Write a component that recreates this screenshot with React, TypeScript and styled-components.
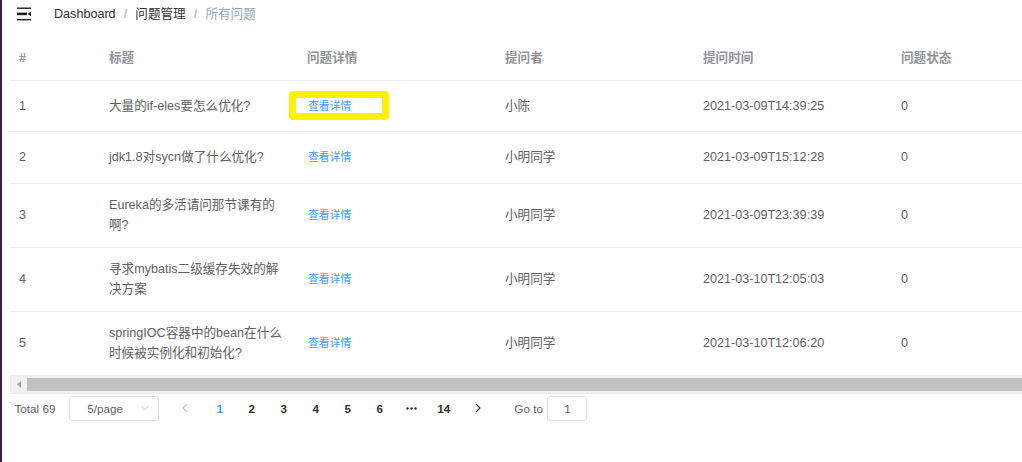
import React from 'react';
import styled, { createGlobalStyle } from 'styled-components';

const GlobalStyle = createGlobalStyle`
  html, body { margin: 0; padding: 0; background: #fff; overflow: hidden; }
  body {
    font-family: "Liberation Sans", "Noto Sans CJK SC", sans-serif;
    -webkit-font-smoothing: antialiased;
  }
  *, *::before, *::after { box-sizing: border-box; }
`;

const Shell = styled.div`
  display: flex;
  width: 1022px;
  height: 462px;
  overflow: hidden;
`;

const SideStrip = styled.div`
  flex: 0 0 2px;
  background: #431848;
`;

const Main = styled.div`
  flex: 0 0 auto;
  width: 1200px;
  padding-left: 8px;
  display: flex;
  flex-direction: column;
`;

const Navbar = styled.div`
  height: 28px;
  display: flex;
  align-items: center;
  padding-left: 7px;
`;

const Hamburger = styled.svg`
  width: 14px;
  height: 14px;
  margin-right: 23px;
  flex: 0 0 auto;
`;

const Breadcrumb = styled.nav`
  display: flex;
  align-items: center;
  font-size: 12.6px;
  line-height: 20px;
`;

const Crumb = styled.span<{ $current?: boolean }>`
  color: ${(p) => (p.$current ? '#97a8be' : '#303133')};
`;

const Sep = styled.span`
  margin: 0 8.1px;
  color: #c0c4cc;
  font-weight: bold;
`;

const Table = styled.table`
  border-collapse: collapse;
  table-layout: fixed;
  width: 1080px;
  margin-top: 9.7px;
  font-size: 12.6px;
  color: #606266;
`;

const Col = styled.col<{ $w: number }>`
  width: ${(p) => p.$w}px;
`;

const Th = styled.th`
  padding: 10.8px 0;
  border-bottom: 1px solid #ebeef5;
  text-align: left;
  font-weight: bold;
  color: #909399;
  vertical-align: middle;
`;

const Td = styled.td<{ $tall?: boolean }>`
  padding: ${(p) => (p.$tall ? '11.3px 0' : '10.8px 0')};
  border-bottom: 1px solid #ebeef5;
  vertical-align: middle;
`;

const Cell = styled.div`
  padding: 0 9px;
  line-height: 20.7px;
  word-break: break-all;
`;

const DetailButton = styled.button<{ $highlight?: boolean }>`
  position: relative;
  display: block;
  height: 28.8px;
  padding: 0;
  border: 1px solid transparent;
  background: transparent;
  color: #409eff;
  font-family: inherit;
  font-size: 10.8px;
  line-height: 26.8px;
  cursor: pointer;
  &::after {
    content: '';
    display: ${(p) => (p.$highlight ? 'block' : 'none')};
    position: absolute;
    left: -19.5px;
    top: -1.6px;
    width: 100px;
    height: 29px;
    border: 7px solid #fff200;
    border-radius: 4px;
  }
`;

const HScroll = styled.div`
  display: flex;
  align-items: center;
  width: 1080px;
  height: 18px;
  background: #f1f1f1;
  border-bottom: 1px solid #ebeef5;
`;

const ScrollArrow = styled.div`
  flex: 0 0 17px;
  height: 17px;
  display: flex;
  align-items: center;
  justify-content: center;
`;

const ScrollThumb = styled.div`
  flex: 1;
  height: 13px;
  background: #c1c1c1;
`;

const Pagination = styled.div`
  display: flex;
  align-items: center;
  padding: 2px 4.5px;
  font-size: 11.7px;
  color: #303133;
  font-weight: bold;
`;

const Total = styled.span`
  height: 25.2px;
  line-height: 25.2px;
  margin-right: 13.3px;
  font-weight: normal;
  color: #606266;
`;

const SizeSelect = styled.div`
  position: relative;
  display: flex;
  align-items: center;
  width: 90px;
  height: 25.2px;
  margin-right: 13px;
  padding-left: 17.5px;
  border: 1px solid #dcdfe6;
  border-radius: 3px;
  font-weight: normal;
  color: #606266;
`;

const SelectArrow = styled.svg`
  position: absolute;
  right: 9px;
  top: 50%;
  margin-top: -3px;
  width: 8px;
  height: 6px;
`;

const NavBtn = styled.div<{ $side: 'prev' | 'next' }>`
  display: flex;
  align-items: center;
  justify-content: center;
  width: 32px;
  height: 25.2px;
  padding: ${(p) => (p.$side === 'prev' ? '0 10.8px 0 5.4px' : '0 5.4px 0 10.8px')};
`;

const Pager = styled.ul`
  display: flex;
  margin: 0;
  padding: 0;
  list-style: none;
`;

const PageItem = styled.li<{ $active?: boolean }>`
  width: 32px;
  height: 25.2px;
  line-height: 25.2px;
  text-align: center;
  color: ${(p) => (p.$active ? '#409eff' : '#303133')};
  display: flex;
  align-items: center;
  justify-content: center;
`;

const Jump = styled.span`
  display: flex;
  align-items: center;
  margin-left: 22.6px;
  font-weight: normal;
  color: #606266;
`;

const JumpInput = styled.div`
  width: 40px;
  height: 25.2px;
  line-height: 23.2px;
  margin-left: 4.5px;
  border: 1px solid #dcdfe6;
  border-radius: 3px;
  text-align: center;
  color: #606266;
`;

type Issue = { title: string; asker: string; time: string; status: number };

const issues: Issue[] = [
  { title: '大量的if-eles要怎么优化?', asker: '小陈', time: '2021-03-09T14:39:25', status: 0 },
  { title: 'jdk1.8对sycn做了什么优化?', asker: '小明同学', time: '2021-03-09T15:12:28', status: 0 },
  { title: 'Eureka的多活请问那节课有的啊?', asker: '小明同学', time: '2021-03-09T23:39:39', status: 0 },
  { title: '寻求mybatis二级缓存失效的解决方案', asker: '小明同学', time: '2021-03-10T12:05:03', status: 0 },
  { title: 'springIOC容器中的bean在什么时候被实例化和初始化?', asker: '小明同学', time: '2021-03-10T12:06:20', status: 0 },
];

const columns = ['#', '标题', '问题详情', '提问者', '提问时间', '问题状态'];
const widths = [90, 198, 198, 198, 198, 198];

const Chevron = ({ dir, color }: { dir: 'left' | 'right'; color: string }) => (
  <svg width="6" height="10" viewBox="0 0 6 10">
    <polyline
      points={dir === 'left' ? '5,1 1,5 5,9' : '1,1 5,5 1,9'}
      fill="none"
      stroke={color}
      strokeWidth="1.2"
    />
  </svg>
);

export default function App() {
  return (
    <>
      <GlobalStyle />
      <Shell>
        <SideStrip />
        <Main>
          <Navbar>
            <Hamburger viewBox="0 0 14 14">
              <rect x="0" y="0.5" width="14" height="1.4" fill="#1f1f1f" />
              <rect x="0" y="5.6" width="10" height="2.6" fill="#1f1f1f" />
              <polygon points="10.6,6.9 14,4.6 14,9.2" fill="#1f1f1f" />
              <rect x="0" y="12" width="14" height="1.4" fill="#1f1f1f" />
            </Hamburger>
            <Breadcrumb>
              <Crumb>Dashboard</Crumb>
              <Sep>/</Sep>
              <Crumb>问题管理</Crumb>
              <Sep>/</Sep>
              <Crumb $current>所有问题</Crumb>
            </Breadcrumb>
          </Navbar>

          <Table>
            <colgroup>
              {widths.map((w, i) => (
                <Col key={i} $w={w} />
              ))}
            </colgroup>
            <thead>
              <tr>
                {columns.map((c) => (
                  <Th key={c}>
                    <Cell>{c}</Cell>
                  </Th>
                ))}
              </tr>
            </thead>
            <tbody>
              {issues.map((it, i) => (
                <tr key={i}>
                  <Td $tall={i === 0}>
                    <Cell>{i + 1}</Cell>
                  </Td>
                  <Td>
                    <Cell>{it.title}</Cell>
                  </Td>
                  <Td>
                    <Cell>
                      <DetailButton $highlight={i === 0}>查看详情</DetailButton>
                    </Cell>
                  </Td>
                  <Td>
                    <Cell>{it.asker}</Cell>
                  </Td>
                  <Td>
                    <Cell>{it.time}</Cell>
                  </Td>
                  <Td>
                    <Cell>{it.status}</Cell>
                  </Td>
                </tr>
              ))}
            </tbody>
          </Table>

          <HScroll>
            <ScrollArrow>
              <svg width="4" height="7" viewBox="0 0 4 7">
                <polygon points="0,3.5 4,0 4,7" fill="#a3a3a3" />
              </svg>
            </ScrollArrow>
            <ScrollThumb />
          </HScroll>

          <Pagination>
            <Total>Total 69</Total>
            <SizeSelect>
              5/page
              <SelectArrow viewBox="0 0 8 6">
                <polyline points="0.5,1 4,4.5 7.5,1" fill="none" stroke="#c0c4cc" strokeWidth="1" />
              </SelectArrow>
            </SizeSelect>
            <NavBtn $side="prev">
              <Chevron dir="left" color="#c0c4cc" />
            </NavBtn>
            <Pager>
              <PageItem $active>1</PageItem>
              <PageItem>2</PageItem>
              <PageItem>3</PageItem>
              <PageItem>4</PageItem>
              <PageItem>5</PageItem>
              <PageItem>6</PageItem>
              <PageItem>
                <svg width="11" height="3" viewBox="0 0 11 3">
                  <circle cx="1.5" cy="1.5" r="1.2" fill="#303133" />
                  <circle cx="5.5" cy="1.5" r="1.2" fill="#303133" />
                  <circle cx="9.5" cy="1.5" r="1.2" fill="#303133" />
                </svg>
              </PageItem>
              <PageItem>14</PageItem>
            </Pager>
            <NavBtn $side="next">
              <Chevron dir="right" color="#303133" />
            </NavBtn>
            <Jump>
              Go to
              <JumpInput>1</JumpInput>
            </Jump>
          </Pagination>
        </Main>
      </Shell>
    </>
  );
}
